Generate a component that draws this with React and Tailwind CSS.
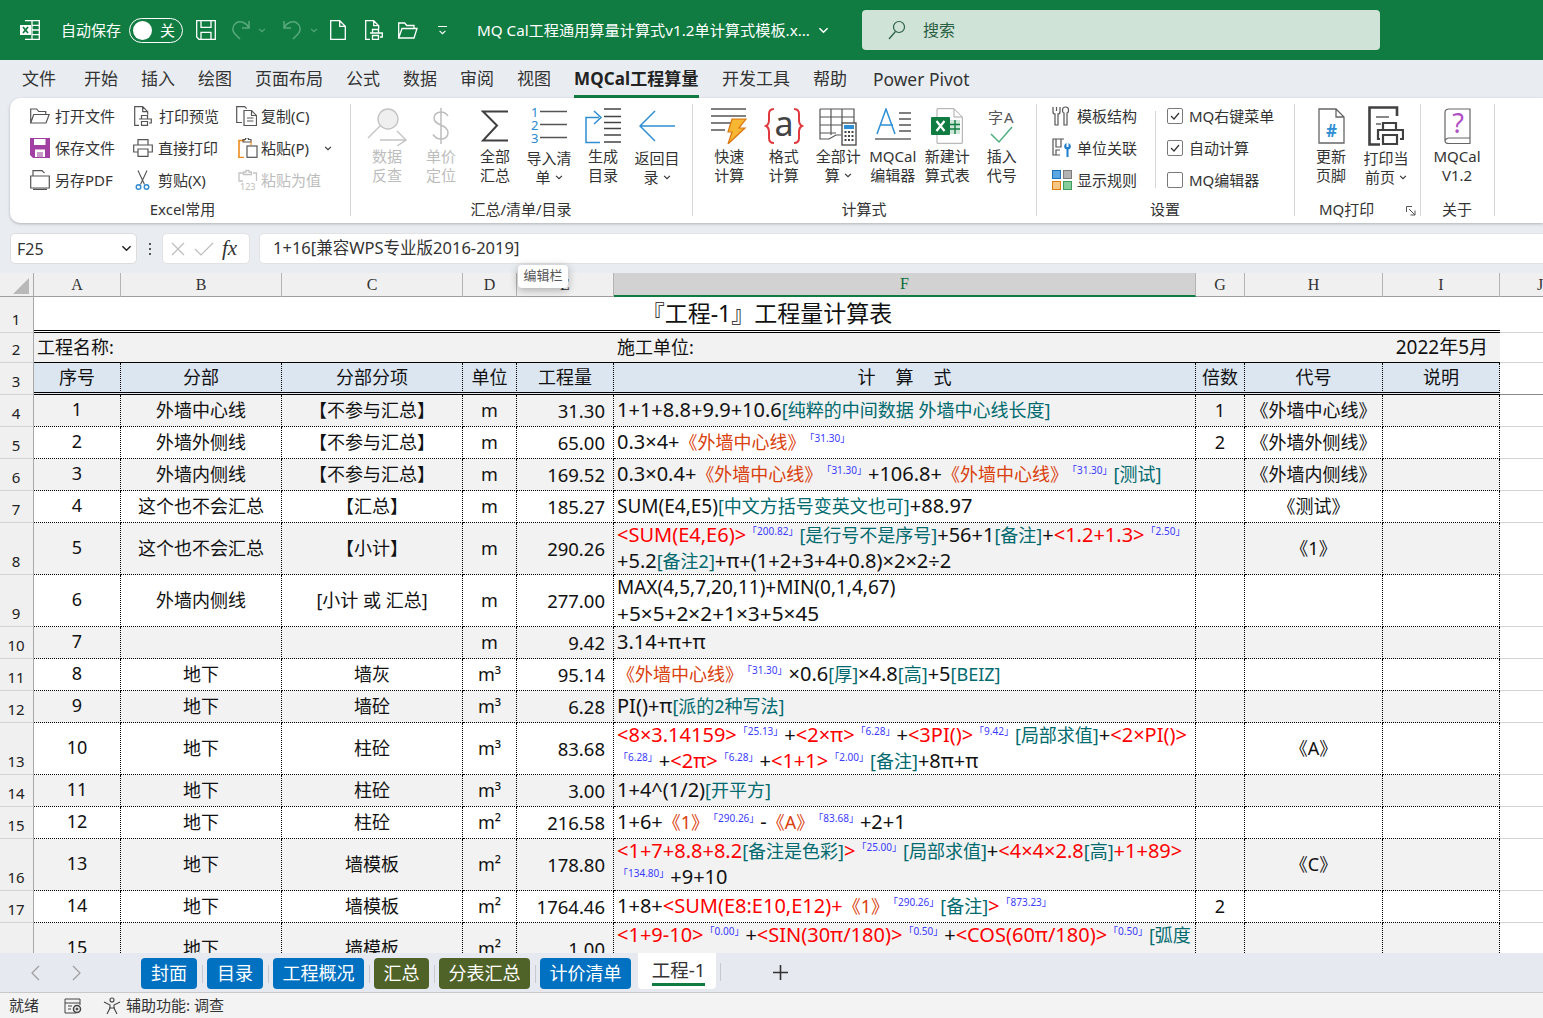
import React from 'react';

const FONT = { fontFamily: '"Noto Sans","Noto Sans CJK SC",sans-serif' };

const R = ({ children }) => <span className="text-[#ff0000]">{children}</span>;
const T = ({ children }) => <span className="text-[18px] text-[#006a6e]">{children}</span>;
const O = ({ children }) => <span className="text-[18px] text-[#d9400c] pr-[3px]">{children}</span>;
const S = ({ children }) => <span className="text-[10px] leading-none text-[#3b3bff] align-[7px] mx-[1px]">「{children}」</span>;

const Chev = ({ className = 'w-[9px] h-[6px]', color = 'currentColor' }) => (
  <svg viewBox="0 0 9 6" className={`inline-block ${className}`} fill="none" stroke={color} strokeWidth="1.3"><path d="M1 1l3.5 3.5L8 1" /></svg>
);

// ---------- title bar icons
const W = { fill: 'none', stroke: '#fff', strokeWidth: 1.3 };
const XlLogo = () => (
  <svg width="20" height="20" viewBox="0 0 20 20" {...W}>
    <path d="M5 .7h14.3v18.6H5M12 .7v18.6M12 5.4h7.3M12 10h7.3M12 14.7h7.3" />
    <rect x="0" y="5" width="11" height="10" fill="#fff" stroke="none" />
    <path d="M3 7l5 6M8 7l-5 6" stroke="#107c41" strokeWidth="1.8" />
  </svg>
);
const TSave = () => (
  <svg width="20" height="20" viewBox="0 0 20 20" {...W}><path d="M.7.7h18.6v18.6H3L.7 17zM5 .7v6.6h10V.7M5 19.3v-7h10v7" /></svg>
);
const TRedo = ({ flip }) => (
  <svg width="18" height="20" viewBox="0 0 18 20" fill="none" stroke="#58a97e" strokeWidth="1.5" className={flip ? '-scale-x-100' : ''}>
    <path d="M17 1v7h-7M17 8C14 2 8 .5 4 3 0 6 0 11 3 14l5 5" />
  </svg>
);
const TNew = () => (
  <svg width="16" height="20" viewBox="0 0 16 20" {...W}><path d="M.7.7h9l5.6 5.6v13H.7zM9.7.7v5.6h5.6" /></svg>
);
const TPrint = () => (
  <svg width="18" height="20" viewBox="0 0 18 20" {...W}><path d="M5 19.3H.7V.7h8l5 5v3M8.7.7v5h5M7.500 13V9.500h6V13M5 13h12.300v4H15M7.500 15.500h6v3.800h-6z" /></svg>
);
const TOpen = () => (
  <svg width="20" height="17" viewBox="0 0 20 17" {...W}><path d="M.7 16V1h6l2 2.500h7.300V6M.7 16l3.300-9.500h15L16 16z" /></svg>
);

// ---------- small ribbon icons
const G = { fill: 'none', stroke: '#555', strokeWidth: 1.2 };
const IcoFolder = () => (
  <svg width="20" height="16" viewBox="0 0 20 16" {...G}><path d="M.7 15V1h6l2 2.500h7V6M.7 15l3-8.500h15.500L16 15z" /></svg>
);
const IcoPreview = () => (
  <svg width="18" height="20" viewBox="0 0 18 20" {...G}><path d="M5 19.300H.7V.7h8l5 5v3M8.700.7v5h5M7.500 13V9.500h6V13M5 13h12.300v4H15M7.500 15.500h6v3.800h-6z" /></svg>
);
const IcoCopy = () => (
  <svg width="21" height="20" viewBox="0 0 21 20" {...G}>
    <path d="M6 16.500H.7V.7h8l2 2" /><path d="M8 4.500h7.500l5 5v10H8zM15.500 4.500v5h5M11 12h6.500M11 15h6.500" />
  </svg>
);
const IcoSave = () => (
  <svg width="20" height="20" viewBox="0 0 20 20"><path d="M0 0h20v20H3l-3-3z" fill="#a23fa2" /><path d="M4 1h11.500v6H4zM5 11.500h10V19H5z" fill="#fff" /><path d="M7 14h6v5H7z" fill="#c79ac8" /></svg>
);
const IcoPrinter = () => (
  <svg width="20" height="18" viewBox="0 0 20 18" {...G}><path d="M5 6V.7h10V6M5 13H.7V6h18.600v7H15M5 10h10v7.300H5z" /></svg>
);
const IcoPaste = () => (
  <svg width="20" height="20" viewBox="0 0 20 20" fill="none" className="ml-[2px]">
    <path d="M7 2.500H1v17h5" stroke="#ee8a1c" strokeWidth="1.600" /><path d="M5 4V1.500h2.500V0h3v1.500H13V4z" stroke="#555" strokeWidth="1.100" /><path d="M13 3.500V7" stroke="#ee8a1c" strokeWidth="1.200" />
    <rect x="9" y="8" width="10" height="11.300" stroke="#555" strokeWidth="1.200" />
  </svg>
);
const IcoPdf = () => (
  <svg width="20" height="20" viewBox="0 0 20 20" {...G}><path d="M3 6V.7h9l2.500 2.500M.7 6h18.600v12H.7z" /><path d="M3 19.500h14" strokeWidth="1.600" /></svg>
);
const IcoCut = () => (
  <svg width="15" height="20" viewBox="0 0 15 20" fill="none" className="ml-[2px]">
    <path d="M3 .5l6.500 14M12 .5L5.500 14.500" stroke="#555" strokeWidth="1.100" />
    <circle cx="3.500" cy="17" r="2.300" stroke="#2f8ad3" strokeWidth="1.400" /><circle cx="11.500" cy="17" r="2.300" stroke="#2f8ad3" strokeWidth="1.400" />
  </svg>
);
const IcoPaste123 = () => (
  <svg width="20" height="20" viewBox="0 0 20 20" fill="none" stroke="#c4c4c4" strokeWidth="1.300" className="ml-[2px] overflow-visible">
    <path d="M5 11H1V3h4M15 3h3.500v8M5.500 4.500V2H8V.5h3V2h2.500v2.500z" />
    <text x="2" y="19.500" fontSize="9" fill="#bdbdbd" stroke="none" style={FONT}>123</text>
  </svg>
);

// ---------- big ribbon icons
const BigSearch = () => (
  <svg width="40" height="38" viewBox="0 0 40 38" fill="none" stroke="#c4c4c4" strokeWidth="1.400">
    <circle cx="21" cy="11" r="10" fill="#efefef" /><path d="M13 18L1 30M13 32h25M30 23l9 9-9 6" />
  </svg>
);
const BigDollar = () => (
  <svg width="20" height="36" viewBox="0 0 20 36" fill="none" stroke="#bdbdbd" strokeWidth="1.500">
    <path d="M10 0v36M17 8c-2-3-4-4-7-4-4 0-7 2.500-7 6 0 8 14 6 14 15 0 3.500-3 6-7 6-3 0-6-1.500-8-4.500" />
  </svg>
);
const BigSigma = () => (
  <svg width="28" height="32" viewBox="0 0 28 32" fill="none" stroke="#404040" strokeWidth="2" className="mt-[2px]"><path d="M27 1.500H2l14 14L2 30.500h25" /></svg>
);
const BigList = () => (
  <svg width="36" height="36" viewBox="0 0 36 36" fill="none" className="overflow-visible">
    <path d="M9 3.500h27M9 16.500h27M9 29.500h27" stroke="#555" strokeWidth="1.600" />
    <text x="0" y="9" fontSize="13" fill="#2a8ad0" stroke="none" style={FONT}>1</text>
    <text x="0" y="22" fontSize="13" fill="#2a8ad0" stroke="none" style={FONT}>2</text>
    <text x="0" y="35" fontSize="13" fill="#2a8ad0" stroke="none" style={FONT}>3</text>
  </svg>
);
const BigToc = () => (
  <svg width="36" height="36" viewBox="0 0 36 36" fill="none">
    <path d="M19 1h17M19 8.500h17M19 14.500h17M19 20.500h17M19 27h17M19 34h17" stroke="#444" strokeWidth="1.300" />
    <path d="M14 9.500H1v25h14M9 3l7 6.500L9 16" stroke="#2f8fd4" strokeWidth="1.500" />
  </svg>
);
const BigBack = () => (
  <svg width="36" height="32" viewBox="0 0 36 32" fill="none" stroke="#2f8fd4" strokeWidth="1.500" className="mt-[2px]"><path d="M36 16H1M16 1L1 16l15 15" /></svg>
);
const BigQuick = () => (
  <svg width="36" height="36" viewBox="0 0 36 36" fill="none">
    <path d="M0 1h35M0 8h35M0 15h20M0 22h14" stroke="#555" strokeWidth="1.400" />
    <path d="M21 11h14l-7 9h6L17 36l4-12h-4z" fill="#f7b733" stroke="#d9730d" strokeWidth="1.200" />
  </svg>
);
const BigFormat = () => (
  <svg width="38" height="36" viewBox="0 0 38 36" fill="none" className="overflow-visible">
    <path d="M9 1C5 1 4 3 4 6v6c0 3-1 5-3 6 2 1 3 3 3 6v6c0 3 1 5 5 5M29 1c4 0 5 2 5 5v6c0 3 1 5 3 6-2 1-3 3-3 6v6c0 3-1 5-5 5" stroke="#e0393e" strokeWidth="2" />
    <text x="19" y="28" textAnchor="middle" fontSize="34" fill="#444" style={FONT}>a</text>
  </svg>
);
const BigTableCalc = () => (
  <svg width="38" height="38" viewBox="0 0 38 38" fill="none">
    <path d="M1 1h34v14M1 1v30h9l7-4h5M12 1v26M23 1v14M1 9h34M1 17h22M1 25h16" stroke="#555" strokeWidth="1.200" />
    <rect x="23" y="15" width="14" height="22" fill="#fff" stroke="#444" strokeWidth="1.300" />
    <rect x="25" y="17" width="10" height="4" fill="#2f8fd4" />
    <path d="M25.500 24h9M25.500 28h9M25.500 32h9" stroke="#444" strokeWidth="2.200" strokeDasharray="2 1.500" />
  </svg>
);
const BigEditor = () => (
  <svg width="36" height="32" viewBox="0 0 36 32" fill="none">
    <path d="M2 26L11 1l9 25M5 17h13" stroke="#2f8fd4" strokeWidth="1.500" />
    <path d="M24 5h12M24 11h12M24 17h12M24 23h12" stroke="#555" strokeWidth="1.300" />
    <path d="M0 31h36" stroke="#666" strokeWidth="1.500" />
  </svg>
);
const BigNewSheet = () => (
  <svg width="32" height="36" viewBox="0 0 32 36" fill="none">
    <path d="M6 .7h17l8.300 8.300v26.300H6z" fill="#fff" stroke="#a8a8a8" />
    <path d="M23 .7V9h8.300" stroke="#a8a8a8" />
    <path d="M19 12h10v14H19" fill="#cfe6d8" />
    <path d="M19 16.500h10M19 21h10M24 12v14" stroke="#107c41" strokeWidth="1.400" />
    <rect x="0" y="9" width="19" height="18" rx="1" fill="#107c41" />
    <path d="M5.500 13l8 10M13.500 13l-8 10" stroke="#fff" strokeWidth="2.200" />
  </svg>
);
const BigInsert = () => (
  <svg width="28" height="36" viewBox="0 0 28 36" fill="none" className="overflow-visible">
    <text x="0" y="15" fontSize="15" fill="#555" style={FONT}>字</text>
    <text x="16" y="15" fontSize="15" fill="#555" style={FONT}>A</text>
    <path d="M3 26l8 8L24 19" stroke="#52ad7f" strokeWidth="1.500" />
  </svg>
);
const BigHash = () => (
  <svg width="27" height="36" viewBox="0 0 27 36" fill="none">
    <path d="M1 1h17l8 8v26H1zM18 1v8h8" stroke="#666" strokeWidth="1.300" />
    <text x="13.500" y="29" textAnchor="middle" fontSize="17" fontWeight="700" fill="#2f8fd4" style={FONT}>#</text>
  </svg>
);
const BigPrintPage = () => (
  <svg width="36" height="40" viewBox="0 0 36 40" fill="none" stroke="#404040" className="-mt-[2px]">
    <path d="M29 10V1.500H1.500v37H12" strokeWidth="2.600" />
    <path d="M8 11h13" strokeWidth="2" stroke="#888" /><path d="M8 18h5" strokeWidth="2" stroke="#888" />
    <path d="M15 24v-7h13v7M12 33h-2V24h25v9h-3M15 29h14v9H15z" strokeWidth="2.200" />
  </svg>
);
const BigBook = () => (
  <svg width="27" height="36" viewBox="0 0 27 36" fill="none" className="overflow-visible">
    <path d="M5 1h21v29H5C3 30 1 31.500 1 33V4C1 2 3 1 5 1zM1 33c0 1.500 2 2.500 4 2.500h21V30" stroke="#666" strokeWidth="1.200" />
    <text x="14" y="25" textAnchor="middle" fontSize="27" fill="#b14fc4" style={FONT}>?</text>
  </svg>
);

const Small = ({ icon, label, muted, extra }) => (
  <div className={`flex items-center h-[32px] text-[15px] whitespace-nowrap ${muted ? 'text-[#bdbdbd]' : 'text-[#333]'}`}>
    <span className="w-[25px] shrink-0 flex items-center">{icon}</span>
    <span>{label}</span>
    {extra}
  </div>
);

const Big = ({ icon, l1, l2, muted, chev, low, w = 'w-[54px]' }) => (
  <div className={`${w} shrink-0 flex flex-col items-center text-[15px] leading-[19px] whitespace-nowrap ${muted ? 'text-[#bdbdbd]' : 'text-[#333]'}`}>
    <div className="h-[49px] pt-[10px] flex items-start justify-center">{icon}</div>
    <div className={low ? 'mt-[2px]' : ''}>{l1}</div>
    <div className="flex items-center gap-[4px]">{l2}{chev && <Chev className="w-[8px] h-[5px]" />}</div>
  </div>
);

const Group = ({ w, label, children, labelClass = '', tail }) => (
  <div className={`${w} shrink-0 h-[125px] relative flex flex-col`}>
    <div className="flex-1 min-h-0">{children}</div>
    <div className={`h-[28px] flex items-center text-[15px] text-[#333] ${labelClass}`}>{label}</div>
    {tail}
    <div className="absolute -right-px top-[6px] bottom-[7px] w-px bg-[#d6d6d6]" />
  </div>
);

const Check = ({ on }) => (
  <span className="w-[16px] h-[16px] mr-[6px] rounded-[2px] border border-[#7a7a7a] bg-white flex items-center justify-center">
    {on && <svg width="10" height="8" viewBox="0 0 10 8" fill="none" stroke="#333" strokeWidth="1.200"><path d="M1 4l3 3 5-6" /></svg>}
  </span>
);

const TopTabs = ['文件', '开始', '插入', '绘图', '页面布局', '公式', '数据', '审阅', '视图'];

function Header() {
  return (
    <>
      <div className="h-[60px] bg-[#107c41] flex items-center text-white shrink-0">
        <div className="ml-[20px] w-[41px]"><XlLogo /></div>
        <span className="text-[15px] w-[68px]">自动保存</span>
        <div className="w-[54px] h-[25px] rounded-full border border-white flex items-center pl-[3px]">
          <span className="w-[19px] h-[19px] rounded-full bg-white" />
          <span className="ml-[8px] text-[15px]">关</span>
        </div>
        <div className="ml-[13px]"><TSave /></div>
        <div className="ml-[16px]"><TRedo /></div>
        <Chev className="w-[8px] h-[5px] ml-[8px]" color="#58a97e" />
        <div className="ml-[17px]"><TRedo flip /></div>
        <Chev className="w-[8px] h-[5px] ml-[9px]" color="#58a97e" />
        <div className="ml-[12px]"><TNew /></div>
        <div className="ml-[19px]"><TPrint /></div>
        <div className="ml-[15px]"><TOpen /></div>
        <div className="ml-[19px] w-[11px] flex flex-col items-center gap-[3px]">
          <span className="w-[9px] h-px bg-white" />
          <Chev className="w-[9px] h-[5px]" color="#fff" />
        </div>
        <span className="ml-[29px] text-[15.2px] whitespace-nowrap w-[340px]">MQ Cal工程通用算量计算式v1.2单计算式模板.x...</span>
        <Chev className="w-[11px] h-[7px] ml-[1px]" color="#fff" />
        <div className="ml-[33px] w-[518px] h-[40px] rounded-[4px] bg-[#cfe3d7] flex items-center pl-[26px] text-[#2b5f44]">
          <svg width="18" height="20" viewBox="0 0 18 20" fill="none" stroke="#2b5f44" strokeWidth="1.200"><circle cx="11" cy="7" r="5.500" /><path d="M7.500 11.500L1 19" /></svg>
          <span className="ml-[17px] text-[16px]">搜索</span>
        </div>
      </div>

      <div className="h-[38px] bg-[#e9edf1] flex items-start pt-[6px] pl-[22px] text-[17px] text-[#333] gap-[23px] shrink-0 whitespace-nowrap">
        {TopTabs.map((t, i) => (
          <span key={t} className={i === 0 ? 'mr-[5px]' : ''}>{t}</span>
        ))}
        <span className="w-[125px] font-bold text-[#222] h-[32px] border-b-[3px] border-[#107c41] tracking-[0.1px]">MQCal工程算量</span>
        <span>开发工具</span>
        <span>帮助</span>
        <span className="ml-[3px] text-[17.400px]">Power Pivot</span>
      </div>

      <div className="bg-[#e9edf1] h-[135px] pl-[10px] shrink-0">
        <div className="h-[125px] bg-white rounded-l-[10px] flex shadow-[0_1px_3px_rgba(0,0,0,0.25)]">
          <Group w="w-[340px]" label="Excel常用" labelClass="justify-center pl-[5px]">
            <div className="pt-[2px] pl-[20px] grid grid-cols-[105px_101px_1fr]">
              <Small icon={<IcoFolder />} label="打开文件" />
              <div className="-ml-[1px]"><Small icon={<IcoPreview />} label="打印预览" /></div>
              <Small icon={<IcoCopy />} label="复制(C)" />
              <Small icon={<IcoSave />} label="保存文件" />
              <div className="-ml-[2px]"><Small icon={<IcoPrinter />} label="直接打印" /></div>
              <Small icon={<IcoPaste />} label="粘贴(P)" extra={<Chev className="w-[8px] h-[5px] ml-[15px]" />} />
              <Small icon={<IcoPdf />} label="另存PDF" />
              <div className="-ml-[2px]"><Small icon={<IcoCut />} label="剪贴(X)" /></div>
              <Small icon={<IcoPaste123 />} label="粘贴为值" muted />
            </div>
          </Group>
          <Group w="w-[342px]" label="汇总/清单/目录" labelClass="justify-center">
            <div className="pl-[10px] flex">
              <Big icon={<BigSearch />} l1="数据" l2="反查" muted />
              <Big icon={<BigDollar />} l1="单价" l2="定位" muted />
              <Big icon={<BigSigma />} l1="全部" l2="汇总" />
              <Big icon={<BigList />} l1="导入清" l2="单" chev low />
              <Big icon={<BigToc />} l1="生成" l2="目录" />
              <Big icon={<BigBack />} l1="返回目" l2="录" chev low />
            </div>
          </Group>
          <Group w="w-[344px]" label="计算式" labelClass="justify-center">
            <div className="pl-[10px] flex">
              <Big w="w-[54.500px]" icon={<BigQuick />} l1="快速" l2="计算" />
              <Big w="w-[54.500px]" icon={<BigFormat />} l1="格式" l2="计算" />
              <Big w="w-[54.500px]" icon={<BigTableCalc />} l1="全部计" l2="算" chev />
              <Big w="w-[54.500px]" icon={<BigEditor />} l1="MQCal" l2="编辑器" />
              <Big w="w-[54.500px]" icon={<BigNewSheet />} l1="新建计" l2="算式表" />
              <Big w="w-[54.500px]" icon={<BigInsert />} l1="插入" l2="代号" />
            </div>
          </Group>
          <Group w="w-[258px]" label="设置" labelClass="justify-center">
            <div className="pt-[2px] pl-[16px] flex">
              <div className="w-[103px]">
                <Small label="模板结构" icon={
                  <svg width="18" height="20" viewBox="0 0 18 20" fill="none" stroke="#555" strokeWidth="1.200"><path d="M1 1v5c0 1.500 1 2 2 2v11h3V8c1 0 2-.5 2-2V1M4.500 1v4M13.500 1c-2 0-3 1-3 3s1 3 1.500 3v12h3V7c.500 0 1.500-1 1.500-3s-1-3-3-3z" /></svg>
                } />
                <Small label="单位关联" icon={
                  <svg width="20" height="20" viewBox="0 0 20 20" fill="none"><path d="M12 1H1v16h7M4 1v8h5V1M4 17v-5h4" stroke="#555" strokeWidth="1.200" /><path d="M14.500 5v4h2V5c2 1 3 3 2 5-.500 1-1 1-2 1.500V19h-2v-7.500c-1-.500-2-1-2.300-2.500-.2-1.500.5-3 2.300-4z" fill="#1f7fce" /></svg>
                } />
                <Small label="显示规则" icon={
                  <svg width="20" height="20" viewBox="0 0 20 20">
                    <rect x=".5" y=".5" width="8" height="8" fill="#5aa7e3" stroke="#1f6fb5" /><rect x="11.500" y=".5" width="8" height="8" fill="#b3b3b3" stroke="#7c7c7c" />
                    <rect x=".5" y="11.500" width="8" height="8" fill="#f9c784" stroke="#e07b10" /><rect x="11.500" y="11.500" width="8" height="8" fill="#87cc9b" stroke="#3d9e5c" />
                  </svg>
                } />
              </div>
              <div className="w-px h-[77px] mt-[11px] bg-[#d6d6d6] mr-[11px]" />
              <div>
                <div className="flex items-center h-[32px] text-[15px] text-[#333]"><Check on />MQ右键菜单</div>
                <div className="flex items-center h-[32px] text-[15px] text-[#333]"><Check on />自动计算</div>
                <div className="flex items-center h-[32px] text-[15px] text-[#333]"><Check />MQ编辑器</div>
              </div>
            </div>
          </Group>
          <Group w="w-[126px]" label="MQ打印" labelClass="pl-[25px]" tail={
            <svg width="10" height="10" viewBox="0 0 10 10" fill="none" stroke="#555" className="absolute left-[112px] bottom-[7px]"><path d="M.5 6V.5H6M3 3l6 6M9 4.500V9H4.500" /></svg>
          }>
            <div className="flex pl-[10px]">
              <Big icon={<BigHash />} l1="更新" l2="页脚" />
              <Big icon={<BigPrintPage />} l1="打印当" l2="前页" chev low w="w-[56px]" />
            </div>
          </Group>
          <Group w="w-[74px]" label="关于" labelClass="justify-center">
            <div className="flex justify-center"><Big icon={<BigBook />} l1="MQCal" l2="V1.2" /></div>
          </Group>
        </div>
      </div>

      <div className="bg-[#e9edf1] h-[40px] flex items-start pl-[10px] shrink-0">
        <div className="w-[127px] h-[31px] bg-white rounded-[5px] border border-[#dcdcdc] flex items-center justify-between pl-[6px] pr-[4px] text-[16px] text-[#333]">
          F25<Chev className="w-[11px] h-[7px]" color="#222" />
        </div>
        <div className="w-[25px] h-[31px] flex flex-col items-center justify-center gap-[3px]">
          <span className="w-[2px] h-[2px] bg-[#555]" /><span className="w-[2px] h-[2px] bg-[#555]" /><span className="w-[2px] h-[2px] bg-[#555]" />
        </div>
        <div className="w-[88px] h-[31px] bg-white rounded-[5px] border border-[#e2e2e2] flex items-center pl-[7px] gap-[8px]">
          <svg width="16" height="16" viewBox="0 0 16 16" fill="none" stroke="#bdbdbd" strokeWidth="1.200"><path d="M2 2l12 12M14 2L2 14" /></svg>
          <svg width="20" height="16" viewBox="0 0 20 16" fill="none" stroke="#bdbdbd" strokeWidth="1.200"><path d="M1 8l6 6L19 2" /></svg>
          <span className="text-[21px] italic text-[#333] leading-none" style={{ fontFamily: '"Liberation Serif",serif' }}>fx</span>
        </div>
        <div className="ml-[9px] flex-1 h-[31px] bg-white rounded-l-[5px] border border-r-0 border-[#e2e2e2] flex items-center pl-[13px] text-[16.500px] text-[#333]">
          1+16[兼容WPS专业版2016-2019]
        </div>
      </div>
    </>
  );
}

const COLS = 'grid grid-cols-[34px_87px_161px_181px_54px_97px_582px_49px_138px_117px_1fr]';
const LETTERS = ['A', 'B', 'C', 'D', 'E', 'F', 'G', 'H', 'I'];

const ROWS = [
  { h: 'h-[32px]', n: 4, a: '1', b: '外墙中心线', c: '【不参与汇总】', d: 'm', e: '31.30', g: '1', i: '《外墙中心线》', f: [<>1+1+8.8+9.9+10.6<T>[纯粹的中间数据 外墙中心线长度]</T></>] },
  { h: 'h-[32px]', n: 5, a: '2', b: '外墙外侧线', c: '【不参与汇总】', d: 'm', e: '65.00', g: '2', i: '《外墙外侧线》', f: [<>0.3×4+<O>《外墙中心线》</O><S>31.30</S></>] },
  { h: 'h-[32px]', n: 6, a: '3', b: '外墙内侧线', c: '【不参与汇总】', d: 'm', e: '169.52', i: '《外墙内侧线》', f: [<>0.3×0.4+<O>《外墙中心线》</O><S>31.30</S>+106.8+<O>《外墙中心线》</O><S>31.30</S><T>[测试]</T></>] },
  { h: 'h-[32px]', n: 7, a: '4', b: '这个也不会汇总', c: '【汇总】', d: 'm', e: '185.27', i: '《测试》', f: [<><span className="text-[19px]">SUM(E4,E5)</span><T>[中文方括号变英文也可]</T>+88.97</>] },
  { h: 'h-[52px]', n: 8, a: '5', b: '这个也不会汇总', c: '【小计】', d: 'm', e: '290.26', i: '《1》', f: [<><R>&lt;SUM(E4,E6)&gt;</R><S>200.82</S><T>[是行号不是序号]</T>+56+1<T>[备注]</T>+<R>&lt;1.2+1.3&gt;</R><S>2.50</S></>, <>+5.2<T>[备注2]</T>+π+(1+2+3+4+0.8)×2×2÷2</>] },
  { h: 'h-[52px]', n: 9, a: '6', b: '外墙内侧线', c: '[小计 或 汇总]', d: 'm', e: '277.00', f: [<span className="text-[19px]">MAX(4,5,7,20,11)+MIN(0,1,4,67)</span>, <span className="text-[20.800px]">+5×5+2×2+1×3+5×45</span>] },
  { h: 'h-[32px]', n: 10, a: '7', d: 'm', e: '9.42', f: [<>3.14+π+π</>] },
  { h: 'h-[32px]', n: 11, a: '8', b: '地下', c: '墙灰', d: 'm³', e: '95.14', f: [<><O>《外墙中心线》</O><S>31.30</S>×0.6<T>[厚]</T>×4.8<T>[高]</T>+5<T>[BEIZ]</T></>] },
  { h: 'h-[32px]', n: 12, a: '9', b: '地下', c: '墙砼', d: 'm³', e: '6.28', f: [<>PI()+π<T>[派的2种写法]</T></>] },
  { h: 'h-[52px]', n: 13, a: '10', b: '地下', c: '柱砼', d: 'm³', e: '83.68', i: '《A》', f: [<><R>&lt;8×3.14159&gt;</R><S>25.13</S>+<R>&lt;2×π&gt;</R><S>6.28</S>+<R>&lt;3PI()&gt;</R><S>9.42</S><T>[局部求值]</T>+<R>&lt;2×PI()&gt;</R></>, <><S>6.28</S>+<R>&lt;2π&gt;</R><S>6.28</S>+<R>&lt;1+1&gt;</R><S>2.00</S><T>[备注]</T>+8π+π</>] },
  { h: 'h-[32px]', n: 14, a: '11', b: '地下', c: '柱砼', d: 'm³', e: '3.00', f: [<>1+4^(1/2)<T>[开平方]</T></>] },
  { h: 'h-[32px]', n: 15, a: '12', b: '地下', c: '柱砼', d: 'm²', e: '216.58', f: [<>1+6+<O>《1》</O><S>290.26</S>-<O>《A》</O><S>83.68</S>+2+1</>] },
  { h: 'h-[52px]', n: 16, a: '13', b: '地下', c: '墙模板', d: 'm²', e: '178.80', i: '《C》', f: [<><R>&lt;1+7+8.8+8.2</R><T>[备注是色彩]</T><R>&gt;</R><S>25.00</S><T>[局部求值]</T>+<R>&lt;4×4×2.8</R><T>[高]</T><R>+1+89&gt;</R></>, <><S>134.80</S>+9+10</>] },
  { h: 'h-[32px]', n: 17, a: '14', b: '地下', c: '墙模板', d: 'm²', e: '1764.46', g: '2', f: [<>1+8+<R>&lt;SUM(E8:E10,E12)+</R><O>《1》</O><S>290.26</S><T>[备注]</T><R>&gt;</R><S>873.23</S></>] },
  { h: 'h-[52px]', n: 18, a: '15', b: '地下', c: '墙模板', d: 'm²', e: '1.00', f: [<><R>&lt;1+9-10&gt;</R><S>0.00</S>+<R>&lt;SIN(30π/180)&gt;</R><S>0.50</S>+<R>&lt;COS(60π/180)&gt;</R><S>0.50</S><T>[弧度</T></>, <>&nbsp;</>] },
];

const cell = 'border-r border-b border-dotted border-black flex items-center justify-center';
const headCell = 'bg-[#dce6f1] border-r border-dotted border-black border-b-[3px] [border-bottom-style:double] flex items-center justify-center';
const RowNum = ({ n, h }) => (
  <div className={`${h} bg-[#f0f0f0] border-r border-b border-[#a9a9a9] border-b-[#d4d4d4] flex items-end justify-center pb-[4px] pr-[1px] text-[15px] leading-[18px] text-[#222]`}>{n}</div>
);

function Sheet() {
  return (
    <div className="flex-1 min-h-0 relative text-[18px] text-[#111]">
      <div className="h-full overflow-hidden bg-white">
        <div className={`${COLS} h-[24px] bg-[#f0f0f0] border-b border-[#9e9e9e] text-[16px] text-[#333]`} style={{ fontFamily: '"Liberation Serif",serif' }}>
          <div className="border-r border-[#a9a9a9] flex items-end justify-end">
            <svg width="17" height="17" viewBox="0 0 17 17" className="mr-[3px] mb-[2px]"><path d="M16 0v16H0z" fill="#b9b9b9" /></svg>
          </div>
          {LETTERS.map((l) => (
            <div key={l} className={`flex items-center justify-center border-r leading-none ${l === 'F' ? 'bg-[#d2d2d2] border-b-2 border-[#107c41] border-r-[#b4b4b4] h-[24px] text-[#0d6b38]' : 'border-[#b4b4b4]'}`}>{l}</div>
          ))}
          <div className="pl-[37px] flex items-center leading-none">J</div>
        </div>

        <div className={`${COLS} h-[36px]`}>
          <RowNum n={1} h="h-[36px]" />
          <div className="col-span-9 h-[36px] flex items-center justify-center text-[23px] leading-none border-b-[3px] border-double border-black pb-[1px]">『工程-1』工程量计算表</div>
          <div className="border-b border-[#d4d4d4]" />
        </div>
        <div className={`${COLS} h-[30px]`}>
          <RowNum n={2} h="h-[30px]" />
          <div className="col-span-5 bg-[#f2f2f2] border-b border-black flex items-center pl-[3px]">工程名称:</div>
          <div className="col-span-1 bg-[#f2f2f2] border-b border-black flex items-center pl-[3px]">施工单位:</div>
          <div className="col-span-3 bg-[#f2f2f2] border-b border-black flex items-center justify-end pr-[12px] text-[19px]">2022年5月</div>
          <div className="border-b border-[#d4d4d4]" />
        </div>
        <div className={`${COLS} h-[32px]`}>
          <RowNum n={3} h="h-[32px]" />
          {['序号', '分部', '分部分项', '单位', '工程量'].map((t) => (
            <div key={t} className={headCell}>{t}</div>
          ))}
          <div className={`${headCell} tracking-[20px] pl-[20px]`}>计算式</div>
          {['倍数', '代号', '说明'].map((t) => (
            <div key={t} className={headCell}>{t}</div>
          ))}
          <div className="border-b border-[#8a8a8a]" />
        </div>

        {ROWS.map((r) => {
          const bg = r.n % 2 === 0 ? 'bg-[#f2f2f2]' : 'bg-white';
          return (
            <div key={r.n} className={`${COLS} ${r.h}`}>
              <RowNum n={r.n} h={r.h} />
              <div className={`${cell} ${bg} pb-[3px]`}>{r.a}</div>
              <div className={`${cell} ${bg}`}>{r.b}</div>
              <div className={`${cell} ${bg}`}>{r.c}</div>
              <div className={`${cell} ${bg}`}>{r.d}</div>
              <div className={`${cell} ${bg} !justify-end pr-[8px] text-[18.500px]`}>{r.e}</div>
              <div className={`${cell} ${bg} !justify-start !items-stretch min-h-0 pl-[3px] flex-col whitespace-nowrap text-[20px]`}>
                <div className="h-full flex flex-col justify-center -mt-[1px]">
                  {r.f.map((line, i) => <div key={i} className="h-[26px] leading-[26px]">{line}</div>)}
                </div>
              </div>
              <div className={`${cell} ${bg}`}>{r.g}</div>
              <div className={`${cell} ${bg}`}>{r.i}</div>
              <div className={`${cell} ${bg}`} />
              <div className="border-b border-[#d4d4d4]" />
            </div>
          );
        })}
      </div>

      <div className="absolute left-[518px] -top-[8px] w-[50px] h-[23px] bg-white rounded-[4px] shadow-[0_2px_8px_rgba(0,0,0,0.3)] text-[13px] leading-[21px] text-center text-[#555] whitespace-nowrap">编辑栏</div>
    </div>
  );
}

const SheetTab = ({ w, color, children }) => (
  <div className={`${w} ${color} h-[31px] rounded-[4px] flex items-center justify-center text-[18px] text-white whitespace-nowrap`}>{children}</div>
);
const Sep = () => <div className="w-px h-[18px] bg-[#c6c9d0] mx-[4.500px]" />;

function Footer() {
  return (
    <>
      <div className="h-[40px] bg-[#e6e9f0] flex items-start shrink-0 border-b border-[#c9c9c9]">
        <div className="w-[141px] h-[39px] flex items-center pl-[31px] gap-[32px] text-[#a3a3a3]">
          <svg width="9" height="16" viewBox="0 0 9 16" fill="none" stroke="#9d9d9d" strokeWidth="1.200"><path d="M8 1L1 8l7 7" /></svg>
          <svg width="9" height="16" viewBox="0 0 9 16" fill="none" stroke="#9d9d9d" strokeWidth="1.200"><path d="M1 1l7 7-7 7" /></svg>
        </div>
        <div className="flex items-center pt-[5px] h-[36px]">
          <SheetTab w="w-[56px]" color="bg-[#0070c0]">封面</SheetTab><Sep />
          <SheetTab w="w-[56px]" color="bg-[#0070c0]">目录</SheetTab><Sep />
          <SheetTab w="w-[91px]" color="bg-[#0070c0]">工程概况</SheetTab><Sep />
          <SheetTab w="w-[55px]" color="bg-[#4f6228]">汇总</SheetTab><Sep />
          <SheetTab w="w-[91px]" color="bg-[#4f6228]">分表汇总</SheetTab><Sep />
          <SheetTab w="w-[91px]" color="bg-[#0070c0]">计价清单</SheetTab>
        </div>
        <div className="ml-[7px] w-[78px] h-[36px] bg-white rounded-b-[4px] flex flex-col items-center text-[18.500px] text-[#333] pt-[3px] pl-[3px]">
          <span className="leading-[27px]">工程-1</span>
          <span className="w-[53px] h-[3px] bg-[#107c41]" />
        </div>
        <div className="w-px h-[18px] bg-[#c6c9d0] mt-[10px] ml-[4px]" />
        <svg width="15" height="15" viewBox="0 0 15 15" className="ml-[52px] mt-[12px]" fill="none" stroke="#333" strokeWidth="1.600"><path d="M7.500 0v15M0 7.500h15" /></svg>
      </div>
      <div className="h-[25px] bg-[#f3f3f3] flex items-center pl-[9px] text-[15px] text-[#333] shrink-0">
        <span className="w-[55px]">就绪</span>
        <svg width="18" height="16" viewBox="0 0 18 16" fill="none" stroke="#444"><path d="M12 15H1V1h15v6M1 5h15M4 8h4M4 11h3" /><circle cx="13" cy="11" r="3.500" strokeWidth="1.500" /><circle cx="13" cy="11" r="1" fill="#444" /></svg>
        <svg width="18" height="18" viewBox="0 0 18 18" className="ml-[21px]" fill="none" stroke="#444" strokeWidth="1.100"><circle cx="9" cy="3" r="2" /><path d="M1 5l6 3v3l-3 6M17 5l-6 3v3l3 6M6 11h6" /></svg>
        <span className="ml-[5px]">辅助功能: 调查</span>
      </div>
    </>
  );
}

export default function App() {
  return (
    <div className="w-[1543px] h-[1018px] overflow-hidden flex flex-col bg-white" style={FONT}>
      <Header />
      <Sheet />
      <Footer />
    </div>
  );
}
